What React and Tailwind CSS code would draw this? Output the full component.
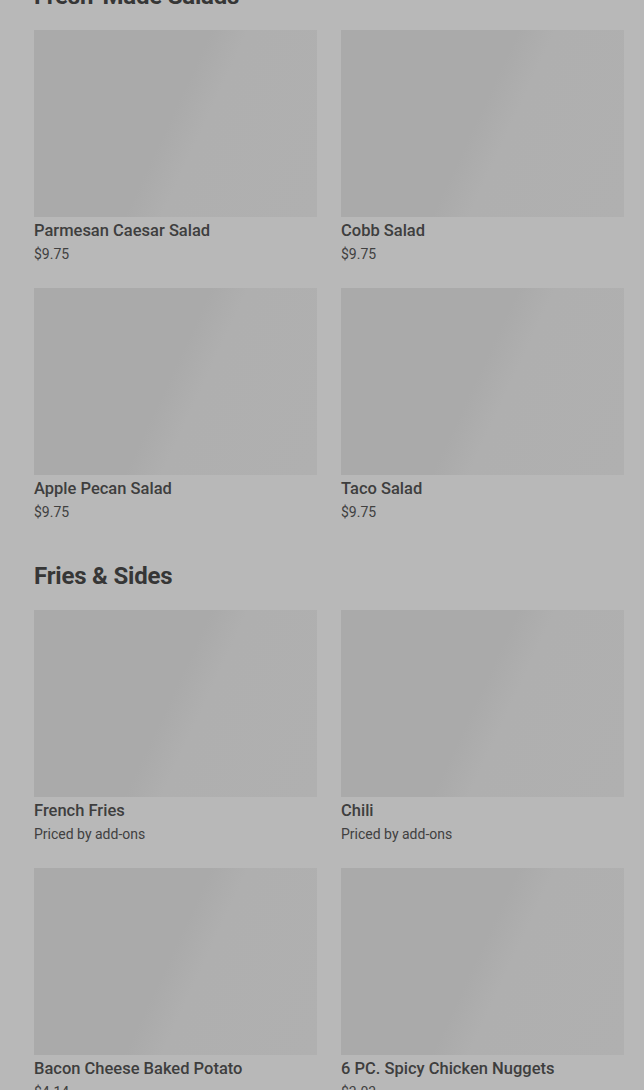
const sections = [
  {
    title: "Fresh-Made Salads",
    items: [
      { name: "Parmesan Caesar Salad", price: "$9.75" },
      { name: "Cobb Salad", price: "$9.75" },
      { name: "Apple Pecan Salad", price: "$9.75" },
      { name: "Taco Salad", price: "$9.75" },
    ],
  },
  {
    title: "Fries & Sides",
    items: [
      { name: "French Fries", price: "Priced by add-ons" },
      { name: "Chili", price: "Priced by add-ons" },
      { name: "Bacon Cheese Baked Potato", price: "$4.14" },
      { name: "6 PC. Spicy Chicken Nuggets", price: "$3.03" },
    ],
  },
];

const Card = ({ item }) => (
  <div className="flex flex-col">
    <div className="h-[187px] w-full bg-[linear-gradient(115deg,#aaaaaa_0%,#aaaaaa_48%,#afafaf_58%,#b0b0b0_100%)]" />
    <div className="mt-[4px] text-[16.5px] leading-[20px] font-medium text-[#3e3e3e]">
      {item.name}
    </div>
    <div className="mt-[3px] text-[14px] leading-[20px] text-[#404040]">
      {item.price}
    </div>
  </div>
);

export default function App() {
  return (
    <div
      className="h-[1090px] overflow-hidden bg-[#b8b8b8] pl-[34px] pr-[20px]"
      style={{ fontFamily: "Roboto, 'Liberation Sans', sans-serif" }}
    >
      <div className="-mt-[16px] flex flex-col">
        {sections.map((s, i) => (
          <section key={s.title} className={i > 0 ? "mt-[42px]" : ""}>
            <h2 className="text-[24px] leading-[24px] font-bold tracking-[-0.2px] text-[#363636]">
              {s.title}
            </h2>
            <div className="mt-[22px] grid grid-cols-2 gap-x-[24px] gap-y-[24px]">
              {s.items.map((it) => (
                <Card key={it.name} item={it} />
              ))}
            </div>
          </section>
        ))}
      </div>
    </div>
  );
}
